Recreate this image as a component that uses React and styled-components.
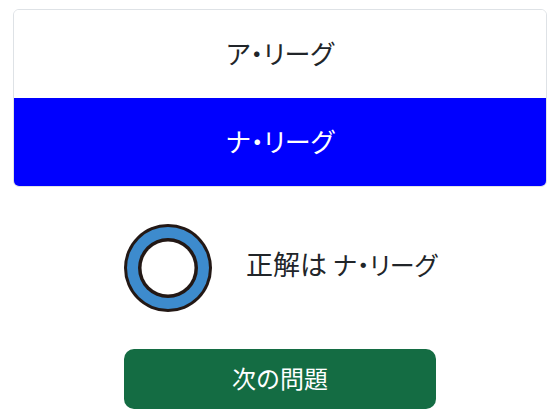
import { createGlobalStyle } from 'styled-components';
import styled from 'styled-components';

const GlobalStyle = createGlobalStyle`
  body {
    margin: 0;
    background: #fff;
    color: #212529;
    font-family: 'Noto Sans CJK JP', 'Noto Sans', sans-serif;
  }
`;

function App() {
  return (
    <>
      <GlobalStyle />
      <Page>
        <ChoiceList>
          <Choice>ア・リーグ</Choice>
          <Choice $selected>ナ・リーグ</Choice>
        </ChoiceList>
        <Result>
          <RingMark viewBox="0 0 88 88" aria-hidden="true">
            <circle cx="44" cy="44" r="44" fill="#231815" />
            <circle cx="44" cy="44" r="41" fill="#3d8bcd" />
            <circle cx="44" cy="44" r="30" fill="#231815" />
            <circle cx="44" cy="44" r="26.5" fill="#fff" />
          </RingMark>
          <ResultText>
            正解は <Answer>ナ・リーグ</Answer>
          </ResultText>
        </Result>
        <NextButton type="button">次の問題</NextButton>
      </Page>
    </>
  );
}

const Page = styled.div`
  display: flex;
  flex-direction: column;
  align-items: center;
  width: 560px;
  padding: 9px 13px 0;
  box-sizing: border-box;
`;

const ChoiceList = styled.ul`
  align-self: stretch;
  margin: 0;
  padding: 0;
  list-style: none;
  border: 1px solid #dee2e6;
  border-radius: 6px;
  overflow: hidden;
`;

const Choice = styled.li`
  display: flex;
  align-items: center;
  justify-content: center;
  height: 88px;
  padding-bottom: 4px;
  box-sizing: border-box;
  font-size: 26px;
  font-feature-settings: 'palt';
  color: ${props => (props.$selected ? '#fff' : '#212529')};
  background-color: ${props => (props.$selected ? '#00f' : '#fff')};
`;

const Result = styled.div`
  display: flex;
  align-items: center;
  gap: 34px;
  width: 312px;
  margin-top: 37px;
`;

const RingMark = styled.svg`
  display: block;
  flex: none;
  width: 88px;
  height: 88px;
`;

const ResultText = styled.span`
  padding-bottom: 10px;
  font-size: 27px;
  font-feature-settings: 'palt';
  white-space: nowrap;
`;

const Answer = styled.span`
  font-size: 25px;
`;

const NextButton = styled.button`
  width: 312px;
  height: 60px;
  margin-top: 37px;
  padding: 0 0 4px;
  border: 0;
  border-radius: 10px;
  background-color: #146c43;
  color: #fff;
  font-family: inherit;
  font-size: 24px;
`;

export default App;
